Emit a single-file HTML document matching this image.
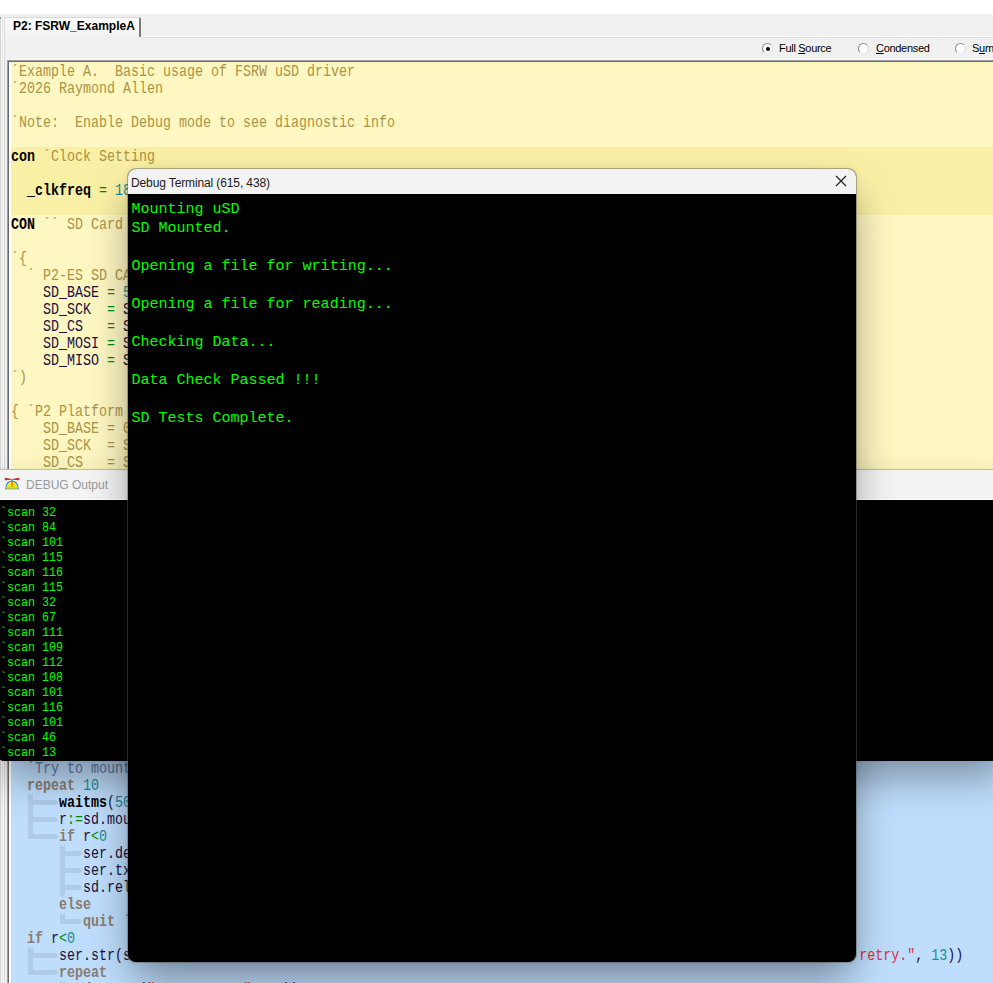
<!DOCTYPE html>
<html><head><meta charset="utf-8">
<style>
*{margin:0;padding:0;box-sizing:border-box}
html,body{width:993px;height:983px;overflow:hidden;background:#f0f0f0;position:relative;font-family:"Liberation Sans",sans-serif}
.abs{position:absolute}
#topwhite{left:0;top:0;width:993px;height:14px;background:#fff}
#tab{left:4px;top:17px;width:137px;height:20px;background:linear-gradient(#fdfdfd,#f2f2f2);border:1px solid #d8d8d8;border-bottom:none;border-right:2px solid #7a7a7a;border-radius:2px 2px 0 0}
#tabtxt{left:13px;top:19px;font:bold 12px "Liberation Sans",sans-serif;color:#000;line-height:14px;white-space:nowrap}
#tabline{left:141px;top:36px;width:852px;height:1px;background:#fff}
.radio{width:11px;height:11px;border-radius:50%;background:#fff;border:1px solid #8a8a8a;border-right-color:#d8d8d8;border-bottom-color:#e8e8e8}
.radio.on::after{content:"";position:absolute;left:3px;top:3px;width:4px;height:4px;border-radius:50%;background:#000}
.rlab{letter-spacing:-0.3px;font:11px "Liberation Sans",sans-serif;color:#000;white-space:nowrap;line-height:13px}
.u{text-decoration:underline}
#edborder{left:7px;top:60px;width:986px;height:923px;border-left:1px solid #a0a0a0;border-top:1px solid #a0a0a0}
#edborder2{left:8px;top:61px;width:985px;height:922px;border-left:1px solid #696969;border-top:1px solid #696969}
#edwhite{left:9px;top:62px;width:2px;height:921px;background:#fff}
.bg{left:11px;width:982px}
.ln{position:absolute;left:11px;margin-top:1px;height:17px;white-space:pre;font-family:"Liberation Mono",monospace;font-size:16.5px;line-height:17px;transform-origin:0 0;transform:scaleX(0.8081)}
.c{color:#ab9344}
.cb{color:#5e79a6}
.k{color:#000;font-weight:bold}
.id{color:#1c1040}
.op{color:#008a00}
.n{color:#1a8c9c}
.kw{color:#8a7c70;font-weight:bold}
.s{color:#e2303e}
.gd{position:absolute;background:#adcae8}
/* windows */
#dbgout{left:-2px;top:470px;width:1010px;height:291px;background:#000;border-radius:0 0 6px 6px;box-shadow:0 20px 42px -4px rgba(0,0,0,0.36),0 0 4px rgba(0,0,0,0.06)}
#dbgtitle{left:0;top:-1px;width:100%;height:31px;background:#f3f3f3;border-top:1px solid rgba(0,0,0,0.22);border-bottom:1px solid #fff}
#dbgtitletxt{left:28px;top:7px;font:12px "Liberation Sans",sans-serif;color:#999;line-height:16px}
.dl{position:absolute;left:2px;margin-top:6px;white-space:pre;font-family:"Liberation Mono",monospace;font-size:12.5px;line-height:15px;color:#00ff00;transform-origin:0 0;transform:scaleX(0.9333)}
#term{left:128px;top:169px;width:728px;height:793px;background:#000;border-radius:8px;box-shadow:0 0 0 1px rgba(90,90,90,0.45),0 20px 44px -6px rgba(0,0,0,0.45),0 0 6px rgba(0,0,0,0.08);overflow:hidden}
#termtitle{left:0;top:0;width:100%;height:25px;background:#f3f3f3}
#termtitletxt{left:3px;top:7px;letter-spacing:-0.12px;font:12px "Liberation Sans",sans-serif;color:#1a1a1a;line-height:15px;white-space:nowrap}
.tl{position:absolute;left:3.6px;margin-top:2px;white-space:pre;font-family:"Liberation Mono",monospace;font-size:15px;line-height:19px;color:#00ff00}
</style></head><body>
<div id="topwhite" class="abs"></div>
<div class="abs" style="left:0;top:17px;width:1px;height:966px;background:#d4d4d4"></div>
<div class="abs" style="left:0;top:17px;width:1px;height:2px;background:#8a8a8a"></div>
<div class="abs" style="left:1px;top:17px;width:1px;height:966px;background:#f6f6f6"></div>
<div class="abs" style="left:2px;top:17px;width:1px;height:966px;background:#e6e6e6"></div>
<div class="abs" style="left:3px;top:17px;width:1px;height:966px;background:#fafafa"></div>
<div class="abs" style="left:4px;top:17px;width:1px;height:966px;background:#d8d8d8"></div>
<div id="tab" class="abs"></div>
<div id="tabtxt" class="abs">P2: FSRW_ExampleA</div>
<div id="tabline" class="abs"></div>
<div class="abs" style="left:141px;top:37px;width:852px;height:1px;background:#e2e2e2"></div>
<div class="abs" style="left:6px;top:59px;width:987px;height:1px;background:#f8f8f8"></div>

<div class="abs radio on" style="left:762px;top:43px"></div>
<div class="abs rlab" style="left:779px;top:42px">Full <span class="u">S</span>ource</div>
<div class="abs radio" style="left:858px;top:43px"></div>
<div class="abs rlab" style="left:876px;top:42px"><span class="u">C</span>ondensed</div>
<div class="abs radio" style="left:955px;top:43px"></div>
<div class="abs rlab" style="left:972px;top:42px">S<span class="u">u</span>mmary</div>

<div id="edborder" class="abs"></div>
<div id="edborder2" class="abs"></div>
<div id="edwhite" class="abs"></div>
<!-- section backgrounds -->
<div class="abs bg" style="top:62px;height:85px;background:#fef7c2"></div>
<div class="abs bg" style="top:147px;height:68px;background:#faf0a5"></div>
<div class="abs bg" style="top:215px;height:500px;background:#fef7c2"></div>
<div class="abs bg" style="top:715px;height:268px;background:#bfdefd"></div>

<svg class="abs" style="left:0;top:0" width="993" height="983"><g fill="#aecbea"><polygon points="28,793 30.5,796 33,793 33,839 28,839"/><polygon points="33,800 56,800 58.5,802.5 56,805 33,805"/><polygon points="33,817 56,817 58.5,819.5 56,822 33,822"/><polygon points="33,834 56,834 58.5,836.5 56,839 33,839"/><polygon points="60,844 62.5,847 65,844 65,894 62.5,898 60,894"/><polygon points="65,851 80,851 82.5,853.5 80,856 65,856"/><polygon points="65,868 80,868 82.5,870.5 80,873 65,873"/><polygon points="65,885 80,885 82.5,887.5 80,890 65,890"/><polygon points="60,912 62.5,915 65,912 65,924 60,924"/><polygon points="65,919 80,919 82.5,921.5 80,924 65,924"/><polygon points="28,946 30.5,949 33,946 33,975 28,975"/><polygon points="33,953 56,953 58.5,955.5 56,958 33,958"/><polygon points="33,970 56,970 58.5,972.5 56,975 33,975"/><polygon points="60,980 62.5,983 65,980 65,1000 60,1000"/></g></svg>
<div id="code" class="abs" style="left:0;top:0">
<div class="ln c" style="top:62px">´Example A.  Basic usage of FSRW uSD driver</div>
<div class="ln c" style="top:79px">´2026 Raymond Allen</div>
<div class="ln c" style="top:113px">´Note:  Enable Debug mode to see diagnostic info</div>
<div class="ln" style="top:147px"><span class="k">con</span> <span class="c">´Clock Setting</span></div>
<div class="ln" style="top:181px">  <span class="k">_clkfreq</span> <span class="op">=</span> <span class="n">180_000_000</span></div>
<div class="ln" style="top:215px"><span class="k">CON</span> <span class="c">´´ SD Card Pins</span></div>
<div class="ln c" style="top:249px">´{</div>
<div class="ln c" style="top:266px">  ´ P2-ES SD CARD</div>
<div class="ln" style="top:283px"><span class="id">    SD_BASE</span> <span class="op">=</span> <span class="n">58</span></div>
<div class="ln" style="top:300px"><span class="id">    SD_SCK </span> <span class="op">=</span> <span class="id">SD_BASE</span></div>
<div class="ln" style="top:317px"><span class="id">    SD_CS  </span> <span class="op">=</span> <span class="id">SD_BASE</span></div>
<div class="ln" style="top:334px"><span class="id">    SD_MOSI</span> <span class="op">=</span> <span class="id">SD_BASE</span></div>
<div class="ln" style="top:351px"><span class="id">    SD_MISO</span> <span class="op">=</span> <span class="id">SD_BASE</span></div>
<div class="ln c" style="top:368px">´)</div>
<div class="ln c" style="top:402px">{ ´P2 Platform SD</div>
<div class="ln c" style="top:419px">    SD_BASE = 0</div>
<div class="ln c" style="top:436px">    SD_SCK  = SD</div>
<div class="ln c" style="top:453px">    SD_CS   = SD</div>

<div class="ln cb" style="top:759px">  ´Try to mount SD</div>
<div class="ln" style="top:776px">  <span class="kw">repeat</span> <span class="n">10</span></div>
<div class="ln" style="top:793px">      <span class="k">waitms</span><span class="id">(</span><span class="n">500</span></div>
<div class="ln" style="top:810px">      <span class="id">r</span><span class="op">:=</span><span class="id">sd.mount</span></div>
<div class="ln" style="top:827px">      <span class="kw">if</span> <span class="id">r</span><span class="op">&lt;</span><span class="n">0</span></div>
<div class="ln id" style="top:844px">         ser.dec(</div>
<div class="ln id" style="top:861px">         ser.tx(</div>
<div class="ln id" style="top:878px">         sd.rele</div>
<div class="ln" style="top:895px">      <span class="kw">else</span></div>
<div class="ln" style="top:912px">         <span class="kw">quit</span> <span class="cb">´</span></div>
<div class="ln" style="top:929px">  <span class="kw">if</span> <span class="id">r</span><span class="op">&lt;</span><span class="n">0</span></div>
<div class="ln" style="top:946px">      <span class="id">ser.str(str</span>                                                                                         <span class="s">retry."</span><span class="id">, </span><span class="n">13</span><span class="id">))</span></div>
<div class="ln" style="top:963px">      <span class="kw">repeat</span></div>
<div class="ln" style="top:980px">         <span class="id">d.error(</span><span class="s">"recover now"</span><span class="id">, </span><span class="n">13</span><span class="id">))</span></div>
</div>

<div id="dbgout" class="abs">
 <div id="dbgtitle" class="abs"></div>
 <div id="dbgtitletxt" class="abs">DEBUG Output</div>
 <svg class="abs" style="left:2px;top:0" width="24" height="30" viewBox="0 0 24 30">
  <path d="M4.8 7.8 L11.6 9 L11.6 9.7 L4.8 10.2 Z M19.2 7.8 L12.4 9 L12.4 9.7 L19.2 10.2 Z" fill="#e41c1c"/>
  <rect x="11" y="9.3" width="2" height="2" fill="#3aa6e8"/>
  <path d="M5.2 19.2 Q5.2 10.8 12 10.8 Q18.8 10.8 18.8 19.2 Z" fill="#2a8cf0"/>
  <path d="M6.6 18.6 Q6.6 11.8 12 11.8 Q17.4 11.8 17.4 18.6 Z" fill="#ffea00"/>
  <path d="M10.7 18.6 L11.2 11.9 L12.8 11.9 L13.3 18.6 Z" fill="#ff7f1a"/>
  <rect x="6" y="16.6" width="12" height="1.8" fill="#d8d820"/>
 </svg>
 <div class="dl" style="top:30px">`scan 32</div>
 <div class="dl" style="top:45px">`scan 84</div>
 <div class="dl" style="top:60px">`scan 101</div>
 <div class="dl" style="top:75px">`scan 115</div>
 <div class="dl" style="top:90px">`scan 116</div>
 <div class="dl" style="top:105px">`scan 115</div>
 <div class="dl" style="top:120px">`scan 32</div>
 <div class="dl" style="top:135px">`scan 67</div>
 <div class="dl" style="top:150px">`scan 111</div>
 <div class="dl" style="top:165px">`scan 109</div>
 <div class="dl" style="top:180px">`scan 112</div>
 <div class="dl" style="top:195px">`scan 108</div>
 <div class="dl" style="top:210px">`scan 101</div>
 <div class="dl" style="top:225px">`scan 116</div>
 <div class="dl" style="top:240px">`scan 101</div>
 <div class="dl" style="top:255px">`scan 46</div>
 <div class="dl" style="top:270px">`scan 13</div>
</div>

<div id="term" class="abs">
 <div id="termtitle" class="abs"></div>
 <div id="termtitletxt" class="abs">Debug Terminal (615, 438)</div>
 <svg class="abs" style="left:707px;top:6px" width="12" height="12" viewBox="0 0 12 12"><path d="M1 1 L11 11 M11 1 L1 11" stroke="#1a1a1a" stroke-width="1.1"/></svg>
 <div class="tl" style="top:29px">Mounting uSD</div>
 <div class="tl" style="top:48px">SD Mounted.</div>
 <div class="tl" style="top:86px">Opening a file for writing...</div>
 <div class="tl" style="top:124px">Opening a file for reading...</div>
 <div class="tl" style="top:162px">Checking Data...</div>
 <div class="tl" style="top:200px">Data Check Passed !!!</div>
 <div class="tl" style="top:238px">SD Tests Complete.</div>
</div>
</body></html>
